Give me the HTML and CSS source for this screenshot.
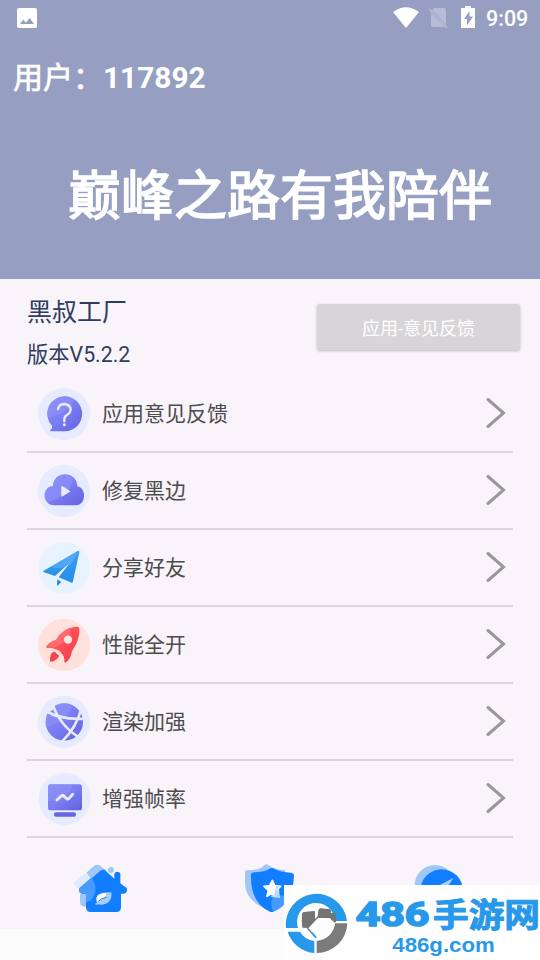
FILE: index.html
```html
<!DOCTYPE html>
<html lang="zh-CN">
<head>
<meta charset="utf-8">
<title>黑叔工厂</title>
<link rel="stylesheet" href="styles.css">
</head>
<body>
<svg class="defs" width="0" height="0" aria-hidden="true">
  <defs>
    <linearGradient id="violet" x1="0" y1="0" x2="1" y2="1"><stop offset="0" stop-color="#8689f8"/><stop offset=".5" stop-color="#7a7df3"/><stop offset="1" stop-color="#6260df"/></linearGradient>
    <linearGradient id="sky" x1="0" y1="0" x2="0" y2="1"><stop offset="0" stop-color="#3f9df3"/><stop offset="1" stop-color="#1e8de4"/></linearGradient>
    <linearGradient id="red" x1="0" y1="0" x2="1" y2="1"><stop offset="0" stop-color="#ff6266"/><stop offset=".55" stop-color="#ff4c57"/><stop offset="1" stop-color="#ed3445"/></linearGradient>
  </defs>
</svg>
<div class="screen">
  <header class="hero">
    <div class="status">
      <svg class="picture" viewBox="0 0 20 20"><path fill="#fff" fill-rule="evenodd" d="M2 0h16a2 2 0 0 1 2 2v16a2 2 0 0 1-2 2H2a2 2 0 0 1-2-2V2a2 2 0 0 1 2-2ZM3 16h14l-4.400-6-3.700 4.700-2.600-3.200Z"/></svg>
      <div class="signals">
        <svg class="wifi" viewBox="0 0 26 21"><path fill="#fff" d="M0 5Q13-4.500 26 5L13 21Z"/></svg>
        <svg class="nosim" viewBox="0 0 20 21"><path fill="#b7bdd6" d="M6 1h10q2 0 2 2v14.500L4 3ZM3 6l14 14H5q-2 0-2-2Z"/><path d="M1 2l18 18.500" stroke="#b7bdd6" stroke-width="1.700"/></svg>
        <svg class="battery" viewBox="0 0 14 22"><path fill="#fff" fill-rule="evenodd" d="M4 0h6v2h4v20H0V2h4ZM8.500 5 3 13h3v6.500l6-9h-3.500Z"/></svg>
        <span class="clock">9:09</span>
      </div>
    </div>
    <div class="user"><span class="user-key">用户：</span>117892</div>
    <h1 class="slogan">巅峰之路有我陪伴</h1>
  </header>

  <section class="about">
    <div>
      <div class="name">黑叔工厂</div>
      <div class="version">版本V5.2.2</div>
    </div>
    <button class="feedback">应用-意见反馈</button>
  </section>

  <ul class="menu">
    <li class="item">
      <svg class="icon" viewBox="54 23 156 156"><circle cx="132" cy="101" r="78" fill="#e7ebff"/><path fill="url(#violet)" d="M134 48a52 52 0 0 1 0 105H92q-4-1 0-5 6-6 4-12A52 52 0 0 1 134 48Z"/><path fill="#9295fa" opacity=".55" d="M84 112a52 52 0 0 1 78-56Q151 98 84 112Z"/><path d="M114 86q3-15 20-15 17 2 18 17-1 10-10 15-9 5-9 13v7" fill="none" stroke="#e9ecff" stroke-width="7" stroke-linecap="round"/><circle cx="133" cy="133" r="4.500" fill="#e9ecff"/></svg>
      <span class="label">应用意见反馈</span>
      <svg class="chevron" viewBox="0 0 20 32"><path d="M2 2.500 17.500 16 2 29.500"/></svg>
    </li>
    <li class="item">
      <svg class="icon" viewBox="54 254 156 156"><circle cx="132" cy="332" r="78" fill="#e7ebff"/><path fill="url(#violet)" d="M99 318c0-48 72-48 73 0 28 4 27 57-4 57h-66c-36 0-37-57-3-57Z"/><path fill="#9295fa" opacity=".55" d="M99 318c0-37 43-44 62-24q-10 51-78 72c-19-19-4-49 16-48Z"/><path fill="#e9ecff" d="M124 319q0-4 4-1l21 13q4 2 0 4l-21 13q-4 2-4-2Z"/></svg>
      <span class="label">修复黑边</span>
      <svg class="chevron" viewBox="0 0 20 32"><path d="M2 2.500 17.500 16 2 29.500"/></svg>
    </li>
    <li class="item">
      <svg class="icon" viewBox="54 34 156 156"><circle cx="132" cy="112" r="78" fill="#e7f4ff"/><path fill="url(#sky)" d="M173 61 70 121q-3 3 2 4l33 11 46-41-35 45 39 16q4 1 4-4l19-87q0-6-5-4ZM112 146l12 8-11 11q-3 0-2-5Z"/><path fill="#68b3fb" opacity=".55" d="M173 61 91 109q39 13 62-15l-8 13q22-17 27-46Z"/></svg>
      <span class="label">分享好友</span>
      <svg class="chevron" viewBox="0 0 20 32"><path d="M2 2.500 17.500 16 2 29.500"/></svg>
    </li>
    <li class="item">
      <svg class="icon" viewBox="54 265 156 156"><circle cx="132" cy="343" r="78" fill="#ffe1db"/><path fill="url(#red)" d="M170 288q8-1 8 8 2 31-22 65-4 26-20 35-4 0-3-7 0-15-8-20-8-12-19-13-10-6-24-4-6-1-2-7 12-14 28-17 20-38 62-40Z"/><path fill="#ff8582" opacity=".45" d="M80 347q12-16 28-19 16-30 46-37 0 38-51 60-14-3-23-4Z"/><circle cx="144" cy="327" r="12.500" fill="#ffe6e1"/><path fill="#f5414f" d="M98 365q5-4 10 2 4 5 8 6 3 3-3 10-8 9-20 10-4 0-3-6 0-15 8-22Z"/></svg>
      <span class="label">性能全开</span>
      <svg class="chevron" viewBox="0 0 20 32"><path d="M2 2.500 17.500 16 2 29.500"/></svg>
    </li>
    <li class="item">
      <svg class="icon" viewBox="54 46 156 156"><circle cx="132" cy="124" r="78" fill="#e7ebff"/><circle cx="133" cy="124" r="56" fill="url(#violet)"/><path fill="#9295fa" opacity=".5" d="M78 137a56 56 0 0 1 78-64q-9 54-78 64Z"/><g fill="none" stroke="#e7ebff" stroke-width="8"><path d="M78 91q43 27 115 23M98 72q22 63 80 99M184 82q-13 57-58 101M80 96l24-19"/></g></svg>
      <span class="label">渲染加强</span>
      <svg class="chevron" viewBox="0 0 20 32"><path d="M2 2.500 17.500 16 2 29.500"/></svg>
    </li>
    <li class="item">
      <svg class="icon" viewBox="54 278 156 156"><circle cx="134" cy="356" r="78" fill="#e7ebff"/><rect x="84" y="312" width="102" height="78" rx="8" fill="url(#violet)"/><path fill="#9295fa" opacity=".5" d="M92 312h67q-10 47-75 51v-43q0-8 8-8Z"/><rect x="102" y="396" width="66" height="13" rx="6" fill="#6764e3"/><path d="m111 359 14-13q3-2 5 0l10 9q3 2 6 0l12-13" fill="none" stroke="#e9ecff" stroke-width="9" stroke-linecap="round"/></svg>
      <span class="label">增强帧率</span>
      <svg class="chevron" viewBox="0 0 20 32"><path d="M2 2.500 17.500 16 2 29.500"/></svg>
    </li>
  </ul>

  <nav class="tabs">
    <svg viewBox="0 0 270 240"><circle cx="153" cy="60" r="9" fill="#9fc7f9"/><path fill="#9fc7f9" d="M42 100 105 46q7-4 14 0l20 16-5 108H76q-16 0-16-15v-22l17-5V96L54 113Z"/><path fill="#dcecff" d="m42 98 37-31 14 19-36 26q-13-3-15-14Z"/><path fill="#117eff" d="M123 61q6-3 12 0l28 25V72q1-7 9-7t9 7v28l18 13q4 4 2 10-3 9-12 8h-6v40q0 15-14 15H92q-14 0-14-15v-40H66q-10-2-9-14Z"/><path fill="#469bff" d="M57 115 95 82q24 39-3 70l-14 5v-26H66q-10-2-9-16Z"/><path fill="#a7cefc" d="M111 158c-8-24 12-32 43-31 3 22-9 42-40 36l-6 2-3-4Z"/><path fill="#fff" d="M111 156c-6-20 6-26 28-27q0 16-28 27Z"/><path d="M115 154q10-10 25-12" fill="none" stroke="#117eff" stroke-width="3"/></svg>
    <svg viewBox="0 0 270 240"><path fill="#9fc7f9" d="M45 65q1-5 8-5 35 2 51-16 5-3 10 0 22 17 51 16l4 55-54 65Q45 153 45 100Z"/><path fill="#117eff" d="M63 72q2-5 10-5 31 0 48-12 4-2 9 0 23 13 52 13 9 0 10 8-3 87-63 109-4 2-9 0-60-27-57-113Z"/><path fill="#469bff" d="M130 185q-15-32 5-49h42q-13 38-47 49Z"/><path fill="#b7d8ff" d="m135 107 11-1 4 37-1 1-26-3Z"/><path fill="#fff" stroke="#fff" stroke-width="5" stroke-linejoin="round" d="m127 91 7 16 18 2-14 12 4 17-15-9-16 10 4-18-13-12 17-2Z"/><path fill="#b7d8ff" d="m139 107 10 0-10 14 10 20q-6 3-16-5Z"/></svg>
    <svg viewBox="0 0 270 240"><circle cx="123" cy="106" r="61" fill="#9fc7f9"/><circle cx="143" cy="122" r="64" fill="#117eff"/><path fill="#acd1ff" d="m178 84-58 30 25 20Z"/></svg>
  </nav>
  <div class="system-bar"></div>

  <svg class="badge" viewBox="12 105 768 225">
    <rect x="12" y="105" width="768" height="225" fill="#fefefe"/>
    <path fill="#2798ea" d="M18 234a92 92 0 0 1 183-21h-36a57 57 0 1 0-111 21ZM23 245h37a57 57 0 0 0 43 28v36a92 92 0 0 1-80-64Z"/>
    <path fill="#7b7b7b" d="M165 220h37a92 92 0 0 1-92 89v-37a57 57 0 0 0 55-52Z"/>
    <path fill="#fefefe" d="m114 203 40 2 11 10-15 37-40 20-28-38Z"/>
    <path fill="#747474" d="M66 193q0-6 5-7l30-3q6 0 4 5v22l-20 24-18-1q-3-20-1-40ZM115 181q1-6 7-6l25 2q6 1 6 5l-1 22-39-2ZM152 188l14 2 3 24-4 4-13-10Z"/>
    <path d="m82 234 32-33 40 2 12 13M82 234l26 29" fill="none" stroke="#747474" stroke-width="4"/>
    <path d="m94 247 14 15" stroke="#2798ea" stroke-width="5"/>
    <text class="badge-digits" x="227" y="229" font-size="98" textLength="221" lengthAdjust="spacingAndGlyphs">486</text>
    <text class="badge-title" x="459" y="230" font-size="98" textLength="321" lengthAdjust="spacingAndGlyphs">手游网</text>
    <text class="badge-url" x="337" y="306" font-size="63" textLength="307" lengthAdjust="spacingAndGlyphs">486g.com</text>
  </svg>
</div>
</body>
</html>
```
FILE: styles.css
```css
* { box-sizing: border-box; }
body { margin: 0; }
.defs { position: absolute; }
.screen {
  position: relative;
  width: 540px;
  height: 960px;
  overflow: hidden;
  display: flex;
  flex-direction: column;
  background: #f8f4f9;
  font-family: Roboto, "Noto Sans CJK SC", sans-serif;
}
.hero { height: 279px; background: #969fc1; color: #fff; }
.status {
  height: 36px;
  padding: 0 12px 0 17px;
  display: flex;
  align-items: center;
  justify-content: space-between;
}
.picture { width: 20px; height: 20px; }
.signals { display: flex; align-items: center; }
.wifi { width: 26px; height: 21px; margin-top: -2px; }
.nosim { width: 20px; height: 21px; margin-left: 9px; margin-top: -2px; }
.battery { width: 14px; height: 22px; margin-left: 13px; margin-top: -2px; }
.clock { margin-left: 11px; padding-top: 2px; font-size: 21.5px; line-height: 36px; font-weight: 500; width: 42px; white-space: nowrap; }
.user {
  margin-top: 21px;
  padding-left: 13px;
  font-size: 29.8px;
  line-height: 42px;
  font-weight: 700;
}
.user-key { font-size: 30px; font-weight: 400; -webkit-text-stroke: .7px #fff; }
.slogan {
  margin: 58px 0 0;
  padding-left: 68px;
  font-size: 53px;
  line-height: 80px;
  font-weight: 400;
  -webkit-text-stroke: 1.6px #fff;
  white-space: nowrap;
}
.about {
  height: 96px;
  padding: 15px 19px 0 27px;
  display: flex;
  justify-content: space-between;
  color: #2f3c60;
}
.name { font-size: 25px; line-height: 38px; }
.version { margin-top: 7px; font-size: 21.300px; line-height: 32px; }
.version, .name { white-space: nowrap; }
.feedback {
  margin: 10px 1px 0 0;
  width: 203px;
  height: 46px;
  padding: 0;
  border: 0;
  border-radius: 3px;
  background: #d7d5d8;
  box-shadow: 0 1px 3px #bbb8bd;
  color: #fff;
  font: 18px Roboto, "Noto Sans CJK SC", sans-serif;
}
.menu { margin: 0; padding: 0 27px; list-style: none; }
.item {
  height: 77px;
  padding: 0 7px 1px 11px;
  display: flex;
  align-items: center;
  border-bottom: 2px solid #d9d5da;
}
.item:first-child { height: 78px; padding-bottom: 0; }
.icon { width: 52px; height: 52px; margin-top: 1px; overflow: visible; }
.label { flex: 1; margin: -3px 0 0 12px; font-size: 21px; color: #4c4b4d; }
.chevron { width: 20px; height: 32px; margin-top: -1px; }
.item:first-child .chevron { margin-top: 0; }
.chevron path { fill: none; stroke: #999799; stroke-width: 3; stroke-linecap: round; }
.tabs {
  height: 91px;
  padding: 12px 0 0 60px;
  display: flex;
  gap: 80px;
}
.tabs svg { width: 90px; height: 80px; flex: none; }
.tabs svg:last-child { margin-left: -6px; }
.system-bar { flex: 1; background: #fcfbfc; }
.badge { position: absolute; left: 284px; top: 885px; width: 256px; height: 75px; }
.badge-title,
.badge-digits {
  fill: #2798ea;
  stroke: #2798ea;
}
.badge-title {
  font-family: "Noto Sans CJK SC", sans-serif;
  font-weight: 700;
  stroke-width: 3;
}
.badge-digits {
  font-family: Roboto, sans-serif;
  font-weight: 700;
  stroke-width: 5;
}
.badge-url { font-family: "Liberation Sans", sans-serif; font-weight: 700; fill: #2798ea; }
```
